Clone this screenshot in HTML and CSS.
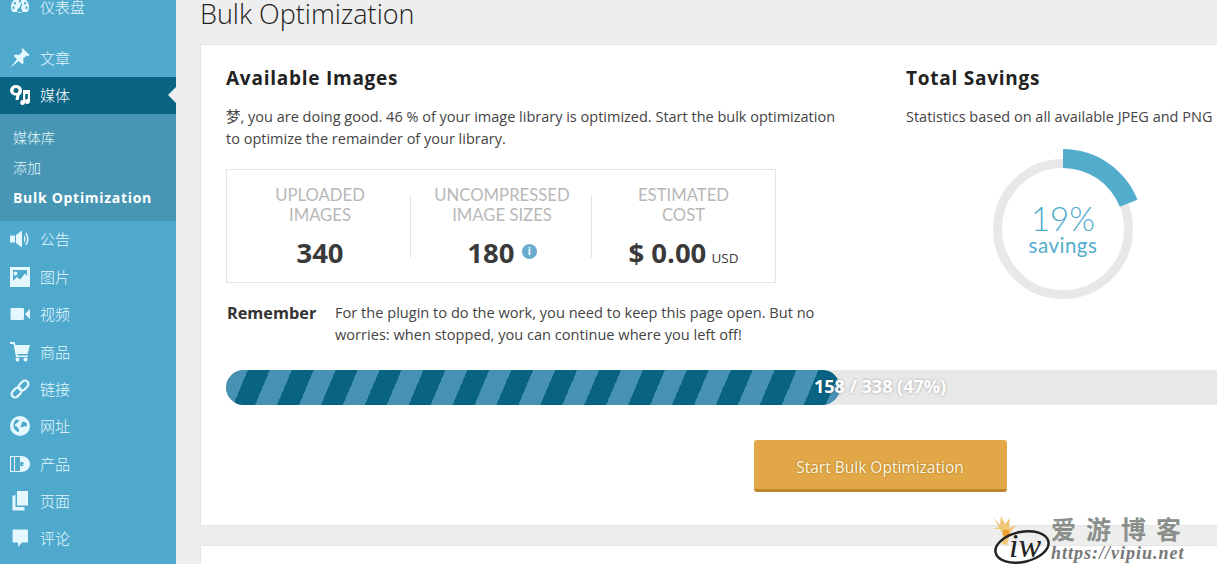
FILE: index.html
```html
<!DOCTYPE html>
<html lang="zh">
<head>
    <meta charset="utf-8">
    <title>Bulk Optimization</title>
    <link rel="stylesheet" href="styles.css">
</head>
<body>
    <div class="sidebar">
        <div class="menu-item first">
            <svg class="menu-icon" viewBox="0 0 20 20"><path fill-rule="evenodd" d="M10 1a9 9 0 0 0-8 13.2c.3.6 1 .8 1.500.8h13c.6 0 1.200-.3 1.500-.8A9 9 0 0 0 10 1zM10 3a1.200 1.200 0 1 1 0 2.400A1.200 1.200 0 0 1 10 3zM5 5a1.200 1.200 0 1 1 0 2.400A1.200 1.200 0 0 1 5 5zm10 0a1.200 1.200 0 1 1 0 2.400A1.200 1.200 0 0 1 15 5zM3.500 9.500a1.200 1.200 0 1 1 0 2.400 1.200 1.200 0 0 1 0-2.400zm13 0a1.200 1.200 0 1 1 0 2.400 1.200 1.200 0 0 1 0-2.400zM11.500 6l.8.3-1.300 5.200a2.500 2.500 0 1 1-1.700-.4z"/></svg>
            <span>仪表盘</span>
        </div>
        <div class="menu-item spaced">
            <svg class="menu-icon" viewBox="0 0 20 20"><path d="M12.500 0l7 7-1.500 1.200-1.300-.7-3.600 3.300.6 4-1.600 1.500-3.400-3.400L0 20l7-8.700-3.300-3.300 1.500-1.600 4 .6L12.500 3.400l-.8-1.300z"/></svg>
            <span>文章</span>
        </div>
        <div class="menu-item active">
            <svg class="menu-icon" viewBox="0 0 20 20"><path fill-rule="evenodd" d="M6 0c3.500 0 6 2.300 6 5.500 0 2.500-1 3.700-2.500 5L8.500 15H5.500l.8-4.500C2.800 10.500 0 8.500 0 5.500S2.500 0 6 0zM6 3a2.500 2.500 0 1 0 0 5 2.500 2.500 0 0 0 0-5z"/><path d="M13 5h7v11.500a2.500 2.500 0 1 1-2.200-2.500V9h-2.600v8.500a2.500 2.500 0 1 1-2.200-2.500z"/></svg>
            <span>媒体</span>
        </div>
        <div class="submenu">
            <div class="sub-item">媒体库</div>
            <div class="sub-item">添加</div>
            <div class="sub-item current">Bulk Optimization</div>
        </div>
        <div class="menu-item">
            <svg class="menu-icon" viewBox="0 0 20 20"><path d="M0 6.500h5v7H0zM6 6l6-4.500v17L6 14z"/><path d="M14 6c2 2 2 6 0 8zM16.200 3.500c3 3.500 3 9.500 0 13l-1-.8c2.400-3 2.400-8.400 0-11.400z"/></svg>
            <span>公告</span>
        </div>
        <div class="menu-item">
            <svg class="menu-icon" viewBox="0 0 20 20"><path fill-rule="evenodd" d="M0 0h20v20H0zM3 3v11l4-4 3 2.500 5-6 2 2.500V3zM5.500 4.500a2 2 0 1 1 0 4 2 2 0 0 1 0-4z"/></svg>
            <span>图片</span>
        </div>
        <div class="menu-item">
            <svg class="menu-icon" viewBox="0 0 20 20"><path d="M2 4h10.500c1 0 1.500.6 1.500 1.500v9c0 .9-.5 1.500-1.500 1.500H2C1 16 .5 15.400.5 14.500v-9C.5 4.600 1 4 2 4zM15 10l5-5v10z"/></svg>
            <span>视频</span>
        </div>
        <div class="menu-item">
            <svg class="menu-icon" viewBox="0 0 20 20"><path d="M0 0h4.500l1 3H20l-2.500 9H7.500l.4 1.500H18V15H6L3.500 2H0z"/><circle cx="7.500" cy="17.500" r="2"/><circle cx="15.500" cy="17.500" r="2"/></svg>
            <span>商品</span>
        </div>
        <div class="menu-item">
            <svg class="menu-icon" viewBox="0 0 20 20"><g fill="none" stroke="currentColor" stroke-width="2.200"><rect x="10" y="1" width="7" height="11" rx="3.500" transform="rotate(45 13.500 6.500)"/><rect x="3" y="8" width="7" height="11" rx="3.500" transform="rotate(45 6.500 13.500)"/></g></svg>
            <span>链接</span>
        </div>
        <div class="menu-item">
            <svg class="menu-icon" viewBox="0 0 20 20"><path fill-rule="evenodd" d="M10 0a10 10 0 1 0 0 20 10 10 0 0 0 0-20zM6 3.500c1.200.5 2.500.3 3.500.8-.3 1-1.500 1.200-2 2.200-.5 1.200-2 1-2.500 2.200-.4 1.300 1 1.800 2 2 1.300.4 1 1.800 1.800 2.800.5.800.3 2-.3 2.700-2-.5-3.500-2.300-4.600-4.200C3 10 3.500 5.500 6 3.500zM13 5.500c1.200.3 2.500.5 3.500 1.500.6 1 .5 2.300 0 3.200-.8.500-1.800-.2-2.700.2-1 .3-2 1.500-3 .7-.7-.9.300-1.900.7-2.600.3-1-.3-2.100 1.500-3z"/></svg>
            <span>网址</span>
        </div>
        <div class="menu-item">
            <svg class="menu-icon" viewBox="0 0 20 20"><path fill-rule="evenodd" d="M0 2h11c5 0 9 3.500 9 8s-4 8-9 8H0zM1 3v14h3V3zm4 0v14h5V3zM12.500 8a2.200 2.200 0 1 0 0 4.200 2.200 2.200 0 0 0 0-4.200zM13 9.500a.7.7 0 1 1 0 1.400.7.7 0 0 1 0-1.400z"/></svg>
            <span>产品</span>
        </div>
        <div class="menu-item">
            <svg class="menu-icon" viewBox="0 0 20 20"><path d="M7 0h11v14.500H7z"/><path d="M5.500 4v12h9v3.500H2.500V4.800z"/></svg>
            <span>页面</span>
        </div>
        <div class="menu-item">
            <svg class="menu-icon" viewBox="0 0 20 20"><path d="M4 1.500h12.500c1 0 1.500.6 1.500 1.500v10c0 1-.5 1.500-1.500 1.500H12l-4 4.500v-4.500H4c-1 0-1.500-.5-1.500-1.500V3c0-.9.5-1.500 1.500-1.500z"/></svg>
            <span>评论</span>
        </div>
    </div>

    <div class="main">
        <h1 class="page-title">Bulk Optimization</h1>

        <div class="card">
            <div class="columns">
                <div class="col-left">
                    <h2>Available Images</h2>
                    <p class="intro">梦, you are doing good. 46 % of your image library is optimized. Start the bulk optimization to optimize the remainder of your library.</p>
                    <div class="stats">
                        <div class="stat first">
                            <div class="stat-label">Uploaded<br>Images</div>
                            <div class="stat-value">340</div>
                        </div>
                        <div class="stat-divider"></div>
                        <div class="stat second">
                            <div class="stat-label">Uncompressed<br>Image Sizes</div>
                            <div class="stat-value">180 <span class="info">i</span></div>
                        </div>
                        <div class="stat-divider"></div>
                        <div class="stat third">
                            <div class="stat-label">Estimated<br>Cost</div>
                            <div class="stat-value">$ 0.00 <small>USD</small></div>
                        </div>
                    </div>
                    <div class="remember">
                        <strong>Remember</strong>
                        <p>For the plugin to do the work, you need to keep this page open. But no worries: when stopped, you can continue where you left off!</p>
                    </div>
                </div>
                <div class="col-right">
                    <h2>Total Savings</h2>
                    <p class="intro nowrap">Statistics based on all available JPEG and PNG</p>
                    <div class="ring">
                        <svg viewBox="0 0 160 160" width="160" height="160">
                            <circle cx="80" cy="80" r="65.500" fill="none" stroke="#e8e8e8" stroke-width="9"/>
                            <path d="M80 0A80 80 0 0 1 154.400 50.700L136.800 57.700A61 61 0 0 0 80 19z" fill="#52accc"/>
                        </svg>
                        <div class="ring-text">
                            <div class="ring-pct">19%</div>
                            <div class="ring-sub">savings</div>
                        </div>
                    </div>
                </div>
            </div>

            <div class="progress">
                <div class="progress-fill"></div>
                <span class="progress-text">158 / 338 (47%)</span>
            </div>
            <div class="actions">
                <button class="start-btn">Start Bulk Optimization</button>
            </div>
        </div>

        <div class="card next"></div>
    </div>

    <div class="watermark">
        <svg class="wm-logo" viewBox="0 0 60 50" width="60" height="50">
            <path d="M1 3l7 8 1-9 4 8 5-6-1 10 7-3-6 8-3 12-5-1 1-10-3-5H1l6-2z" fill="#efc777"/>
            <circle cx="14" cy="19" r="3.500" fill="#f0a030"/>
            <ellipse cx="30" cy="33" rx="27" ry="15" fill="none" stroke="#222" stroke-width="2.500" transform="rotate(-12 30 33)"/>
        </svg>
        <span class="wm-mark">iw</span>
        <div class="wm-text">
            <div class="wm-cn">爱游博客</div>
            <div class="wm-url">https://vipiu.net</div>
        </div>
    </div>
</body>
</html>
```

FILE: styles.css
```css
body {
    margin: 0;
    height: 100vh;
    display: flex;
    overflow: hidden;
    position: relative;
    background-color: #eeeeee;
    color: #444;
    font-family: "Open Sans", "Noto Sans CJK SC", sans-serif;
}

/* Admin menu */
.sidebar {
    width: 176px;
    flex-shrink: 0;
    margin-top: -11px;
    background-color: #4fa9cc;
    color: #e5f8ff;
    font-family: "Noto Sans CJK SC", sans-serif;
}
.menu-item {
    height: 37.4px;
    box-sizing: border-box;
    padding-bottom: 1px;
    display: flex;
    align-items: center;
    position: relative;
    font-size: 15px;
    font-weight: 300;
}
.menu-item span {
    margin-top: -1px;
}
.menu-item.spaced {
    margin-top: 13px;
}
.menu-icon {
    width: 20px;
    height: 20px;
    margin: 0 10px;
    fill: currentColor;
    flex-shrink: 0;
}
.menu-item.active {
    background-color: #096484;
    color: #fff;
}
.menu-item.active::after {
    content: "";
    position: absolute;
    right: 0;
    top: 50%;
    margin-top: -8px;
    border: 8px solid transparent;
    border-right-color: #eeeeee;
    border-left-width: 0;
}
.submenu {
    height: 107px;
    box-sizing: border-box;
    padding-top: 8px;
    background-color: #4796b3;
}
.sub-item {
    height: 30px;
    display: flex;
    align-items: center;
    padding-left: 13px;
    font-size: 14px;
    font-weight: 300;
}
.sub-item.current {
    font-family: "Open Sans", sans-serif;
    font-weight: 700;
    letter-spacing: 0.7px;
    color: #fff;
}

/* Main column */
.main {
    flex: 1;
    min-width: 0;
    overflow: hidden;
    padding-left: 24px;
}
.page-title {
    margin: 0;
    height: 44px;
    line-height: 28px;
    font-size: 27px;
    font-weight: 300;
    color: #222;
}
.card {
    width: 1360px;
    height: 482px;
    box-sizing: border-box;
    margin-left: 0;
    padding: 20px 25px 0;
    background-color: #fff;
    border: 1px solid #e5e5e5;
}
.card.next {
    height: 60px;
    margin-top: 19px;
}
.columns {
    display: flex;
}
.col-left {
    width: 680px;
    flex-shrink: 0;
}
.col-right {
    flex: 1;
}
h2 {
    margin: 0;
    font-size: 19px;
    line-height: 26px;
    font-weight: 700;
    letter-spacing: 0.75px;
    color: #222;
}
.intro {
    width: 625px;
    margin: 15px 0 0;
    font-size: 14.5px;
    line-height: 21.5px;
    color: #444;
}
.intro.nowrap {
    white-space: nowrap;
}

/* Stats box */
.stats {
    width: 550px;
    height: 114px;
    box-sizing: border-box;
    margin-top: 20px;
    display: flex;
    border: 1px solid #e5e5e5;
}
.stat {
    box-sizing: border-box;
    padding-top: 15px;
    text-align: center;
}
.stat.first {
    width: 183px;
    padding-left: 3px;
}
.stat.second {
    width: 180px;
    padding-left: 2px;
}
.stat.third {
    width: 183px;
}
.stat-divider {
    width: 1px;
    height: 63px;
    align-self: center;
    background-color: #e5e5e5;
}
.stat-label {
    font-family: Lato, sans-serif;
    font-size: 16.7px;
    line-height: 20px;
    font-weight: 400;
    text-transform: uppercase;
    color: #b8b8b8;
}
.stat-value {
    margin-top: 10px;
    font-size: 27.5px;
    line-height: 36px;
    font-weight: 700;
    color: #3a3a3a;
}
.stat-value small {
    font-size: 13.5px;
    font-weight: 400;
    margin-left: -2px;
}
.info {
    display: inline-block;
    width: 15px;
    height: 15px;
    border-radius: 50%;
    vertical-align: 8px;
    background-color: #69acd0;
    color: #fff;
    font-size: 10px;
    line-height: 15px;
    font-weight: 700;
}

.remember {
    display: flex;
    margin-top: 19px;
}
.remember strong {
    width: 108px;
    padding-left: 1px;
    flex-shrink: 0;
    font-size: 16.3px;
    line-height: 22px;
    color: #333;
}
.remember p {
    width: 490px;
    margin: 0;
    font-size: 14.6px;
    line-height: 21.5px;
}

/* Savings ring */
.ring {
    width: 160px;
    height: 160px;
    margin: 21px 0 0 77px;
    position: relative;
}
.ring svg {
    display: block;
}
.ring-text {
    position: absolute;
    top: 51px;
    left: 0;
    right: 0;
    text-align: center;
    font-family: Lato, sans-serif;
    color: #52accc;
}
.ring-pct {
    font-size: 33px;
    line-height: 36px;
    font-weight: 300;
}
.ring-sub {
    margin-top: -3px;
    font-size: 20.5px;
    line-height: 24px;
    letter-spacing: 0.5px;
}

/* Progress bar */
.progress {
    width: 100%;
    height: 35px;
    margin-top: 25px;
    display: flex;
    align-items: center;
    justify-content: center;
    position: relative;
    border-radius: 18px;
    background-color: #e8e8e8;
}
.progress-fill {
    position: absolute;
    top: 0;
    left: 0;
    bottom: 0;
    width: 614px;
    border-radius: 18px;
    background-color: #096484;
    background-image: repeating-linear-gradient(113deg, #4791b2 0, #4791b2 20.200px, #096484 20.200px, #096484 40.400px);
}
.progress-text {
    position: relative;
    margin-bottom: 3px;
    font-size: 18px;
    font-weight: 700;
    color: #fff;
    text-shadow: 0 0 3px rgba(0, 0, 0, 0.3);
}

.actions {
    display: flex;
    justify-content: center;
    margin-top: 35px;
}
.start-btn {
    width: 253px;
    height: 52px;
    padding: 4px 0 0;
    border: 0;
    border-bottom: 3px solid #c0862a;
    border-radius: 3px;
    background-color: #e2a847;
    color: #fff8e0;
    font-family: "Open Sans", sans-serif;
    font-size: 15.5px;
    text-shadow: 0 0 2px rgba(120, 80, 0, 0.7);
}

/* Site watermark */
.watermark {
    position: absolute;
    left: 992px;
    top: 514px;
    width: 200px;
    height: 50px;
    display: flex;
}
.wm-logo {
    flex-shrink: 0;
}
.wm-mark {
    position: absolute;
    left: 17px;
    top: 13px;
    font-family: "Liberation Serif", serif;
    font-style: italic;
    font-size: 34px;
    line-height: 38px;
    color: #222;
}
.wm-text {
    margin-left: -1px;
    color: #8a8f8c;
}
.wm-cn {
    font-family: "Liberation Sans", "Noto Sans CJK SC", sans-serif;
    font-size: 25px;
    line-height: 32px;
    font-weight: 700;
    letter-spacing: 10px;
    white-space: nowrap;
}
.wm-url {
    font-family: "Liberation Serif", serif;
    font-size: 18px;
    line-height: 14px;
    font-style: italic;
    font-weight: 700;
    letter-spacing: 1px;
    color: #777;
    white-space: nowrap;
}
```
